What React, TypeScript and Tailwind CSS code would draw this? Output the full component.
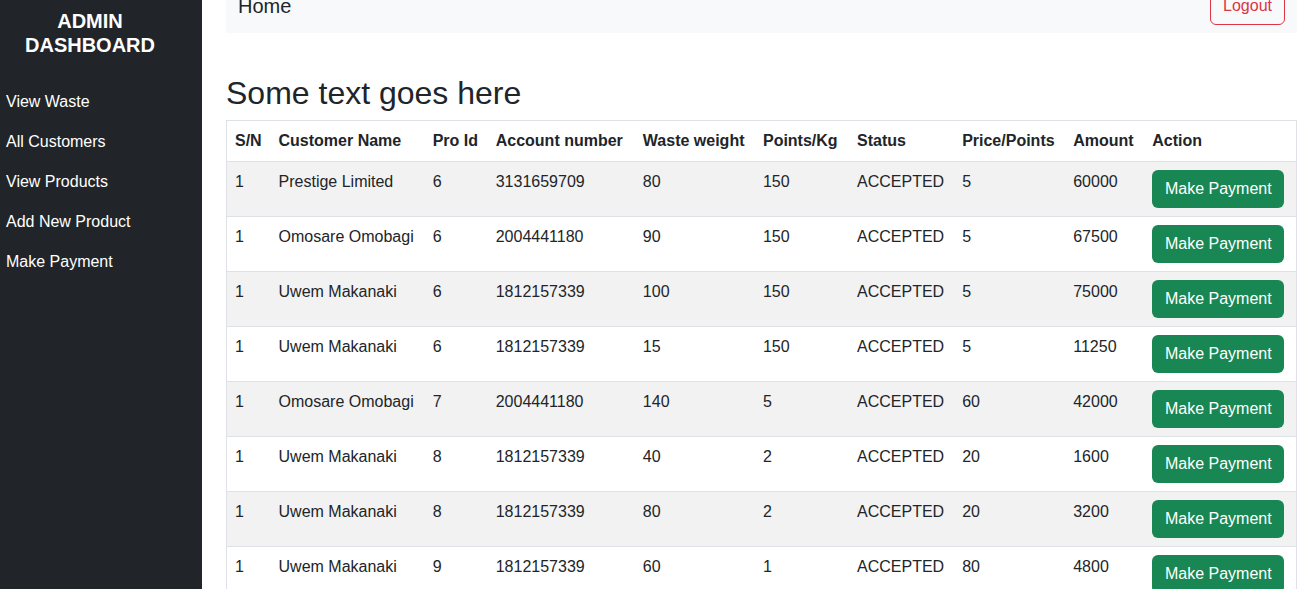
import React from "react";

const rows = [
  ["1", "Prestige Limited", "6", "3131659709", "80", "150", "ACCEPTED", "5", "60000"],
  ["1", "Omosare Omobagi", "6", "2004441180", "90", "150", "ACCEPTED", "5", "67500"],
  ["1", "Uwem Makanaki", "6", "1812157339", "100", "150", "ACCEPTED", "5", "75000"],
  ["1", "Uwem Makanaki", "6", "1812157339", "15", "150", "ACCEPTED", "5", "11250"],
  ["1", "Omosare Omobagi", "7", "2004441180", "140", "5", "ACCEPTED", "60", "42000"],
  ["1", "Uwem Makanaki", "8", "1812157339", "40", "2", "ACCEPTED", "20", "1600"],
  ["1", "Uwem Makanaki", "8", "1812157339", "80", "2", "ACCEPTED", "20", "3200"],
  ["1", "Uwem Makanaki", "9", "1812157339", "60", "1", "ACCEPTED", "80", "4800"],
];

const headers: [string, string][] = [
  ["S/N", "w-[44px]"],
  ["Customer Name", "w-[154px]"],
  ["Pro Id", "w-[63px]"],
  ["Account number", "w-[147px]"],
  ["Waste weight", "w-[120px]"],
  ["Points/Kg", "w-[94px]"],
  ["Status", "w-[105px]"],
  ["Price/Points", "w-[111px]"],
  ["Amount", "w-[79px]"],
  ["Action", "w-[152px]"],
];

const menu = ["View Waste", "All Customers", "View Products", "Add New Product", "Make Payment"];

export default function App() {
  return (
    <div
      className="flex h-[589px] w-[1306px] overflow-hidden bg-white text-[#212529]"
      style={{ fontFamily: '"Liberation Sans", Arial, sans-serif' }}
    >
      <aside className="w-[202px] shrink-0 bg-[#212529] text-white">
        <div className="pt-[9px] pr-[22px] text-center text-[20px] font-bold leading-[24px]">
          ADMIN
          <br />
          DASHBOARD
        </div>
        <ul className="mt-[33px] flex flex-col">
          {menu.map((m) => (
            <li key={m} className="h-[40px] pl-[6px] text-[16px] leading-[24px]">
              {m}
            </li>
          ))}
        </ul>
      </aside>
      <main className="ml-[24px] w-[1071px] shrink-0">
        <nav className="-mt-[21px] flex h-[54px] items-center justify-between bg-[#f8f9fa] px-3">
          <span className="text-[20px] leading-[30px]">Home</span>
          <button className="h-[38px] rounded-md border border-[#dc3545] px-3 text-[16px] text-[#dc3545]">
            Logout
          </button>
        </nav>
        <h2 className="mt-[41px] mb-[8px] text-[32px] leading-[38.4px] font-normal">Some text goes here</h2>
        <table className="w-[1071px] table-fixed border-collapse border border-[#dee2e6] text-[16px] leading-[24px]">
          <thead>
            <tr className="border-b border-[#dee2e6]">
              {headers.map(([h, w]) => (
                <th key={h} className={`${w} p-2 text-left font-bold`}>
                  {h}
                </th>
              ))}
            </tr>
          </thead>
          <tbody>
            {rows.map((r, i) => (
              <tr key={i} className={`border-b border-[#dee2e6] ${i % 2 === 0 ? "bg-[#f2f2f2]" : "bg-white"}`}>
                {r.map((c, j) => (
                  <td key={j} className="p-2 align-top whitespace-nowrap">
                    {c}
                  </td>
                ))}
                <td className="p-2 align-top">
                  <button className="block h-[38px] w-[132px] rounded-md bg-[#198754] text-[16px] text-white">
                    Make Payment
                  </button>
                </td>
              </tr>
            ))}
          </tbody>
        </table>
      </main>
    </div>
  );
}
